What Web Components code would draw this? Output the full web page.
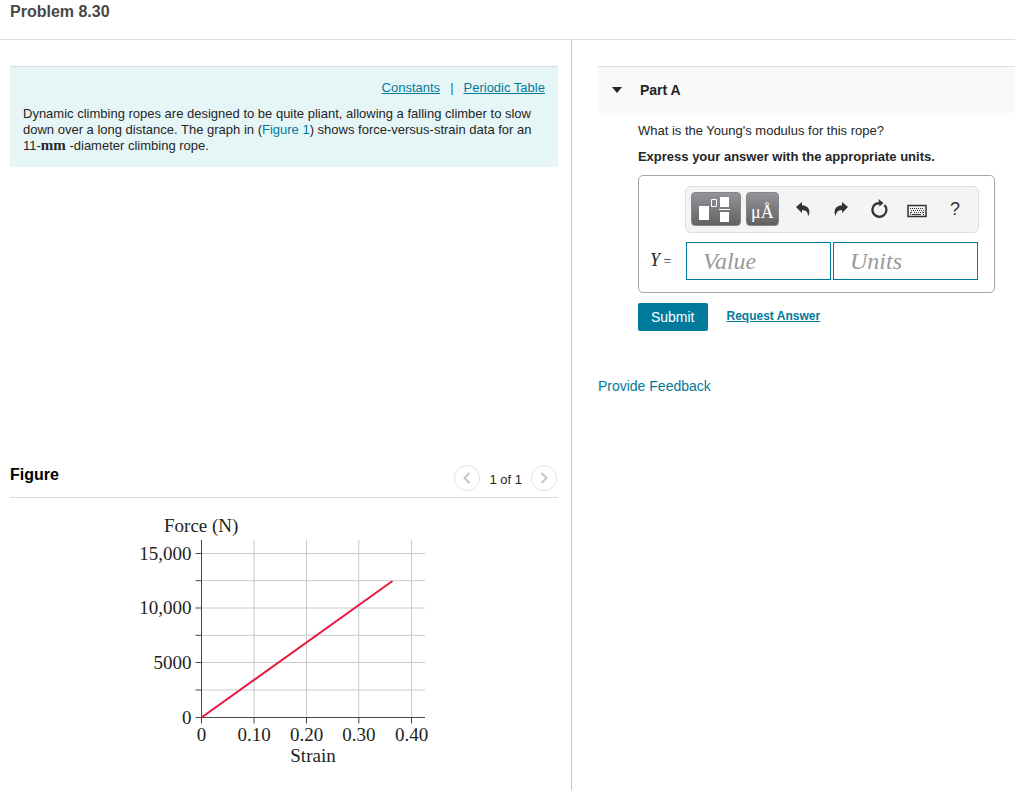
<!DOCTYPE html>
<html lang="en">
<head>
<meta charset="utf-8">
<meta name="viewport" content="width=device-width, initial-scale=1">
<title>Problem 8.30</title>
<style>
    :root {
        --teal: #007a9a;
        --line: #dddddd;
        --text: #252525;
    }

    body {
        margin: 0;
        background: #fff;
        color: var(--text);
        font: 13px/16px "Liberation Sans", Arial, sans-serif;
    }
</style>
</head>
<body>
<problem-page heading="Problem 8.30">
    <problem-statement slot="left">
        Dynamic climbing ropes are designed to be quite pliant, allowing a falling climber to slow down over a long distance. The graph in (<text-link>Figure 1</text-link>) shows force-versus-strain data for an 11-<unit-symbol>mm</unit-symbol> -diameter climbing rope.
    </problem-statement>
    <figure-viewer slot="left" heading="Figure" position="1 of 1">
        <strain-chart></strain-chart>
    </figure-viewer>
    <part-section slot="right" heading="Part A">
        <span slot="question">What is the Young's modulus for this rope?</span>
        <span slot="instruction">Express your answer with the appropriate units.</span>
        <answer-box symbol="Y"></answer-box>
        <answer-actions></answer-actions>
    </part-section>
    <feedback-link slot="right"></feedback-link>
</problem-page>

<script>
class ProblemPage extends HTMLElement {
    connectedCallback() {
        this.attachShadow({ mode: 'open' });
        this.shadowRoot.innerHTML = `
            <style>
                :host {
                    display: flex;
                    flex-direction: column;
                    min-height: 100vh;
                }

                header {
                    box-sizing: border-box;
                    height: 40px;
                    padding: 2px 10px;
                    border-bottom: 1px solid var(--line);
                }

                h1 {
                    margin: 0;
                    font-size: 16px;
                    line-height: 20px;
                    color: #484848;
                }

                main {
                    flex: 1;
                    display: grid;
                    grid-template-columns: minmax(0, 9fr) minmax(0, 7fr);
                }

                .left {
                    display: flex;
                    flex-direction: column;
                    justify-content: space-between;
                    min-width: 0;
                    padding: 26px 13px 18px 10px;
                }

                .right {
                    min-width: 0;
                    padding: 26px 0 0 26px;
                    border-left: 1px solid #bfc6cf;
                }
            </style>
            <header><h1>${this.getAttribute('heading')}</h1></header>
            <main>
                <section class="left"><slot name="left"></slot></section>
                <section class="right"><slot name="right"></slot></section>
            </main>
        `;
    }
}

// no whitespace around the markup here, it sits inside running text
class TextLink extends HTMLElement {
    connectedCallback() {
        this.attachShadow({ mode: 'open' });
        this.shadowRoot.innerHTML = `<style>
                :host { display: inline; }
                a { color: var(--teal); text-decoration: none; }
            </style><a href="#figure"><slot></slot></a>`;
    }
}

class UnitSymbol extends HTMLElement {
    connectedCallback() {
        this.attachShadow({ mode: 'open' });
        this.shadowRoot.innerHTML = `<style>
                :host {
                    display: inline;
                    font: bold 15px/1px "Liberation Serif", "Times New Roman", serif;
                }
            </style><slot></slot>`;
    }
}

class ProblemStatement extends HTMLElement {
    connectedCallback() {
        this.attachShadow({ mode: 'open' });
        this.shadowRoot.innerHTML = `
            <style>
                :host {
                    display: block;
                    padding: 13px;
                    border-top: 1px solid var(--line);
                    background: #e6f6f7;
                }

                nav {
                    display: flex;
                    justify-content: flex-end;
                    gap: 10px;
                    margin-bottom: 10px;
                    color: var(--teal);
                }

                a { color: var(--teal); }

                p { margin: 0; }
            </style>
            <nav>
                <a href="#constants">Constants</a>
                <span>|</span>
                <a href="#periodic-table">Periodic Table</a>
            </nav>
            <p><slot></slot></p>
        `;
    }
}

class FigureViewer extends HTMLElement {
    connectedCallback() {
        this.attachShadow({ mode: 'open' });
        this.shadowRoot.innerHTML = `
            <style>
                :host { display: block; }

                header {
                    display: flex;
                    justify-content: space-between;
                    align-items: flex-start;
                    padding-bottom: 6px;
                    border-bottom: 1px solid var(--line);
                }

                h2 {
                    margin: 0;
                    font-size: 16px;
                    line-height: 20px;
                    color: #000;
                }

                .pager {
                    display: flex;
                    align-items: center;
                    gap: 9px;
                    padding-right: 1px;
                }

                .pager span { padding-top: 4px; }

                button {
                    display: grid;
                    place-items: center;
                    width: 26px;
                    height: 26px;
                    padding: 0;
                    border: 1px solid #e4e4e4;
                    border-radius: 50%;
                    background: #fff;
                }

                .body {
                    display: flex;
                    justify-content: center;
                    padding-top: 12px;
                }
            </style>
            <header>
                <h2>${this.getAttribute('heading')}</h2>
                <div class="pager">
                    <button aria-label="Previous figure">
                        <svg width="12" height="14" fill="none" stroke="#c4c4c4" stroke-width="2"><path d="M8.5 2 3.5 7l5 5"/></svg>
                    </button>
                    <span>${this.getAttribute('position')}</span>
                    <button aria-label="Next figure">
                        <svg width="12" height="14" fill="none" stroke="#c4c4c4" stroke-width="2"><path d="m3.5 2 5 5-5 5"/></svg>
                    </button>
                </div>
            </header>
            <div class="body" id="figure"><slot></slot></div>
        `;
    }
}

class StrainChart extends HTMLElement {
    connectedCallback() {
        const left = 62.5, right = 286, top = 30, bottom = 207.5;
        const xs = [115, 167.5, 219.8, 272.5];
        const ys = [43.5, 70.7, 98, 125.3, 152.5, 180];
        const xLabels = ['0', '0.10', '0.20', '0.30', '0.40'];
        const yLabels = [['15,000', 43.5], ['10,000', 98], ['5000', 152.5], ['0', bottom]];

        const grid = xs.map(x => `M${x} ${top}V${bottom}`).join('') + ys.map(y => `M${left} ${y}H${right}`).join('');
        const ticks = xs.map(x => `M${x} ${bottom}v6`).join('') + ys.map(y => `M${left} ${y}h-6`).join('');

        this.attachShadow({ mode: 'open' });
        this.shadowRoot.innerHTML = `
            <style>
                :host { display: block; }
                svg { display: block; }
                text {
                    font: 19px "Liberation Serif", "Times New Roman", serif;
                    fill: #231f20;
                }
                .x { text-anchor: middle; }
                .y { text-anchor: end; }
            </style>
            <svg width="290" height="262" viewBox="0 0 290 262" role="img" aria-label="Force versus strain">
                <path d="${grid}" stroke="#c9cacb" fill="none"/>
                <path d="M${left} ${top}V${bottom + 6}M${left - 6} ${bottom}H${right}${ticks}" stroke="#48484a" fill="none"/>
                <path d="M${left} ${bottom}L253.5 71" stroke="#e8193c" stroke-width="2" fill="none"/>
                <text x="25" y="22">Force (N)</text>
                ${yLabels.map(([t, y]) => `<text class="y" x="52.5" y="${y + 6}">${t}</text>`).join('')}
                ${xLabels.map((t, i) => `<text class="x" x="${[left, ...xs][i]}" y="231">${t}</text>`).join('')}
                <text class="x" x="174" y="252">Strain</text>
            </svg>
        `;
    }
}

class PartSection extends HTMLElement {
    connectedCallback() {
        this.attachShadow({ mode: 'open' });
        this.shadowRoot.innerHTML = `
            <style>
                :host { display: block; }

                header {
                    display: flex;
                    align-items: center;
                    gap: 18px;
                    height: 46px;
                    padding-left: 14px;
                    border-top: 1px solid var(--line);
                    background: #f9f9f9;
                }

                h2 {
                    margin: 0;
                    font-size: 14px;
                    line-height: 20px;
                }

                .body { padding: 10px 20px 0 40px; }

                p { margin: 0 0 10px; }

                .instruction { font-weight: bold; }
            </style>
            <header>
                <svg width="10" height="6"><path d="M0 0h10L5 6z" fill="#252525"/></svg>
                <h2>${this.getAttribute('heading')}</h2>
            </header>
            <div class="body">
                <p><slot name="question"></slot></p>
                <p class="instruction"><slot name="instruction"></slot></p>
                <slot></slot>
            </div>
        `;
    }
}

class ToolButton extends HTMLElement {
    connectedCallback() {
        this.attachShadow({ mode: 'open' });
        this.shadowRoot.innerHTML = `
            <style>
                :host {
                    display: block;
                    flex: 1;
                    min-width: 0;
                }

                :host([dark]) { flex: none; }

                button {
                    display: grid;
                    place-items: center;
                    width: 100%;
                    height: 34px;
                    padding: 0;
                    border: 0;
                    background: none;
                    color: #333;
                    font: 18px/20px "Liberation Sans", Arial, sans-serif;
                }

                :host([dark]) button {
                    border: 1px solid #858585;
                    border-radius: 4px;
                    background: linear-gradient(#94939a, #626262);
                    color: #fff;
                    font-family: "Liberation Serif", "Times New Roman", serif;
                }

                :host([dark=wide]) { width: 50px; }
                :host([dark=narrow]) { width: 33px; }
                :host([dark=narrow]) button { padding-top: 5px; }
            </style>
            <button aria-label="${this.getAttribute('label')}"><slot></slot></button>
        `;
    }
}

class AnswerBox extends HTMLElement {
    connectedCallback() {
        // rows of keys on the keyboard icon
        const keys = [3, 5, 7, 9, 11, 13, 15].map(x => `M${x} 3.5h1M${x + 1} 5.5h1`).join('');

        this.attachShadow({ mode: 'open' });
        this.shadowRoot.innerHTML = `
            <style>
                :host {
                    display: grid;
                    grid-template-columns: 35px minmax(0, 1fr);
                    row-gap: 9px;
                    padding: 10px 15px 12px 11px;
                    border: 1px solid #a6a6a6;
                    border-radius: 5px;
                }

                .toolbar {
                    grid-column: 2;
                    display: flex;
                    align-items: center;
                    gap: 5px;
                    padding: 5px 4px 6px 5px;
                    border: 1px solid #ddd;
                    border-radius: 6px;
                    background: #f4f4f4;
                }

                .icons {
                    flex: 1;
                    display: flex;
                    min-width: 0;
                }

                svg { display: block; }

                label {
                    align-self: center;
                    font-family: "Liberation Serif", "Times New Roman", serif;
                    font-size: 14px;
                }

                label i { font-size: 18px; }

                .fields {
                    display: flex;
                    gap: 2px;
                    padding: 0 1px;
                }

                input {
                    flex: 1;
                    box-sizing: border-box;
                    min-width: 0;
                    height: 38px;
                    padding: 0 16px;
                    border: 1px solid var(--teal);
                    border-radius: 0;
                    background: #fff;
                    font: italic 24px "Liberation Serif", "Times New Roman", serif;
                }

                input::placeholder {
                    color: #999;
                    opacity: 1;
                }
            </style>
            <div class="toolbar">
                <tool-button dark="wide" label="Templates">
                    <svg width="36" height="26" fill="#fff">
                        <path d="M1 10h10v14H1zM22 1h9v10h-9zM21 13h11v1H21zM22 16h9v10h-9z"/>
                        <path d="M13.500 3.500h5v7h-5z" fill="none" stroke="#fff"/>
                    </svg>
                </tool-button>
                <tool-button dark="narrow" label="Symbols">μÅ</tool-button>
                <div class="icons">
                    <tool-button label="Undo">
                        <svg width="16" height="16" fill="#333"><path d="M1 6 7 1v3.200c5 .2 8 3.300 7.300 8.300L13 15.500c.2-4-1.600-6.400-6-6.500v3z"/></svg>
                    </tool-button>
                    <tool-button label="Redo">
                        <svg width="16" height="16" fill="#333"><path d="M15 6 9 1v3.200c-5 .2-8 3.300-7.300 8.300L3 15.500c-.2-4 1.600-6.400 6-6.500v3z"/></svg>
                    </tool-button>
                    <tool-button label="Reset">
                        <svg width="18" height="20" fill="none" stroke="#333" stroke-width="2.300">
                            <path d="M14.500 6A7 7 0 1 1 5.500 5Q7.500 4 11 4.300"/>
                            <path d="M8.500 0 13.500 4 9.500 7.500z" fill="#333" stroke="none"/>
                        </svg>
                    </tool-button>
                    <tool-button label="Keyboard">
                        <svg width="20" height="17" viewBox="0 -4 20 17" fill="none" stroke="#333">
                            <path d="M1 .5h18v11H1z" stroke-width="1.500"/>
                            <path d="${keys}M3 7.500h2M7 7.500h1M9 7.500h1M11 7.500h1M13 7.500h1M15 7.500h2M3 9.500h1M5 9.500h9M16 9.500h1"/>
                        </svg>
                    </tool-button>
                    <tool-button label="Help">?</tool-button>
                </div>
            </div>
            <label for="value"><i>${this.getAttribute('symbol')}</i> =</label>
            <div class="fields">
                <input id="value" type="text" placeholder="Value">
                <input type="text" placeholder="Units" aria-label="Units">
            </div>
        `;
    }
}

class AnswerActions extends HTMLElement {
    connectedCallback() {
        this.attachShadow({ mode: 'open' });
        this.shadowRoot.innerHTML = `
            <style>
                :host {
                    display: flex;
                    align-items: flex-start;
                    gap: 19px;
                    margin-top: 10px;
                }

                button {
                    height: 28px;
                    padding: 0 13px;
                    border: 0;
                    border-radius: 2px;
                    background: var(--teal);
                    color: #fff;
                    font: 14px/20px "Liberation Sans", Arial, sans-serif;
                }

                a {
                    padding-top: 5px;
                    color: var(--teal);
                    font-size: 12px;
                    font-weight: bold;
                }
            </style>
            <button type="submit">Submit</button>
            <a href="#request">Request Answer</a>
        `;
    }
}

class FeedbackLink extends HTMLElement {
    connectedCallback() {
        this.attachShadow({ mode: 'open' });
        this.shadowRoot.innerHTML = `
            <style>
                :host {
                    display: block;
                    margin-top: 45px;
                    font-size: 14px;
                    line-height: 20px;
                }

                a { color: var(--teal); text-decoration: none; }
            </style>
            <a href="#feedback">Provide Feedback</a>
        `;
    }
}

customElements.define('problem-page', ProblemPage);
customElements.define('text-link', TextLink);
customElements.define('unit-symbol', UnitSymbol);
customElements.define('problem-statement', ProblemStatement);
customElements.define('figure-viewer', FigureViewer);
customElements.define('strain-chart', StrainChart);
customElements.define('part-section', PartSection);
customElements.define('tool-button', ToolButton);
customElements.define('answer-box', AnswerBox);
customElements.define('answer-actions', AnswerActions);
customElements.define('feedback-link', FeedbackLink);
</script>
</body>
</html>
